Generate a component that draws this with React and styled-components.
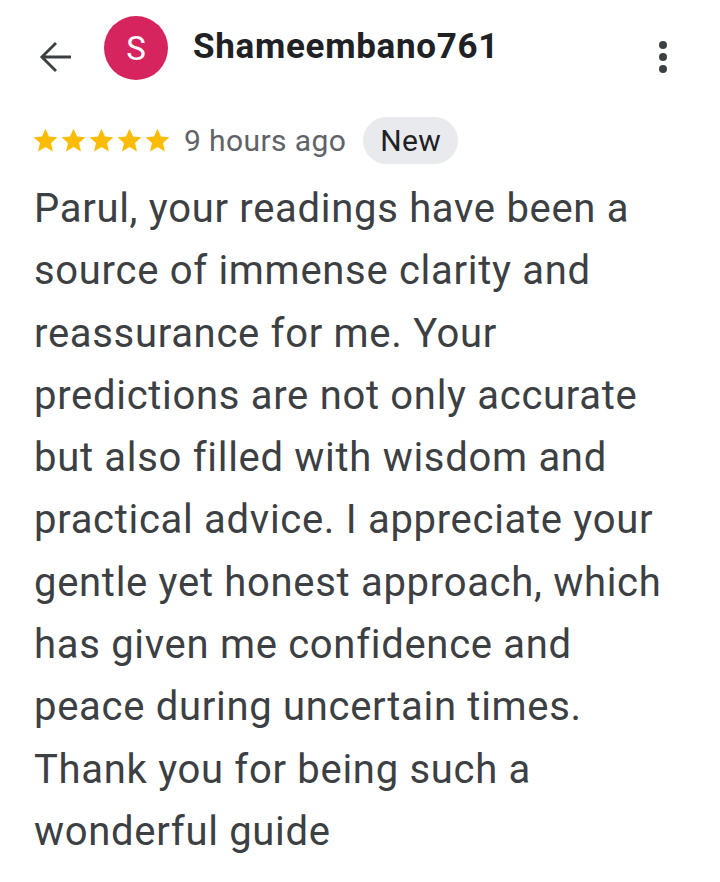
import React from 'react'
import styled, { createGlobalStyle } from 'styled-components'

const GlobalStyle = createGlobalStyle`
  html, body {
    margin: 0;
    padding: 0;
    background: #ffffff;
  }
  body {
    font-family: Roboto, "Noto Sans", Arial, sans-serif;
    -webkit-font-smoothing: antialiased;
  }
`;

const Page = styled.div`
  width: 720px;
  height: 882px;
  background: #fff;
  overflow: hidden;
`;

const Header = styled.header`
  display: flex;
  align-items: center;
  height: 96px;
  padding: 0 40px 0 38px;
`;

const BackButton = styled.button`
  border: 0;
  background: none;
  padding: 0;
  width: 36px;
  height: 36px;
  margin-top: 18px;
  display: flex;
  align-items: center;
  justify-content: center;
`;

const Avatar = styled.div`
  width: 64px;
  height: 64px;
  border-radius: 50%;
  background: #d6245f;
  color: #fff;
  font-size: 33px;
  display: flex;
  align-items: center;
  justify-content: center;
  margin-left: 30px;
  flex-shrink: 0;
`;

const Name = styled.h1`
  margin: -4px 0 0 25px;
  font-size: 35px;
  font-weight: 700;
  color: #202124;
  flex: 1;
  letter-spacing: 0.7px;
`;

const MoreButton = styled.button`
  border: 0;
  background: none;
  padding: 0;
  width: 8px;
  display: flex;
  flex-direction: column;
  gap: 4px;
  margin-top: 18px;
  margin-right: 13px;
`;

const Dot = styled.span`
  width: 8px;
  height: 8px;
  border-radius: 50%;
  background: #3c4043;
`;

const Meta = styled.div`
  display: flex;
  align-items: center;
  padding: 20px 0 0 32px;
  height: 48px;
`;

const Stars = styled.div`
  display: flex;
  gap: 1px;
  margin-right: 13px;
`;

const TimeAgo = styled.span`
  font-size: 30px;
  letter-spacing: 0.4px;
  color: #5f6368;
  margin-right: 17px;
`;

const Badge = styled.span`
  display: inline-flex;
  align-items: center;
  height: 47px;
  padding: 0 17px;
  border-radius: 24px;
  background: #e8eaed;
  color: #202124;
  font-size: 30px;
  letter-spacing: 0.4px;
`;

const Body = styled.p`
  margin: 14px 0 0 0;
  padding: 0 50px 0 34px;
  font-size: 40px;
  letter-spacing: 0.7px;
  line-height: 62.3px;
  color: #3c4043;
`;

const Star = () => (
  <svg width="27" height="27" viewBox="0 0 24 24">
    <path fill="#fbbc04" d="M12 1.5l3.1 7 7.5.7-5.7 5 1.7 7.5L12 17.8l-6.6 3.9 1.7-7.5-5.7-5 7.5-.7z" />
  </svg>
);

export default function App() {
  return (
    <Page>
      <GlobalStyle />
      <Header>
        <BackButton aria-label="Back">
          <svg width="36" height="36" viewBox="0 0 24 24">
            <path fill="none" stroke="#3c4043" strokeWidth="1.9" d="M22 12H2.8M12 2.6L2.6 12l9.4 9.4" />
          </svg>
        </BackButton>
        <Avatar>S</Avatar>
        <Name>Shameembano761</Name>
        <MoreButton aria-label="More">
          <Dot /><Dot /><Dot />
        </MoreButton>
      </Header>
      <Meta>
        <Stars>
          {[0, 1, 2, 3, 4].map(i => <Star key={i} />)}
        </Stars>
        <TimeAgo>9 hours ago</TimeAgo>
        <Badge>New</Badge>
      </Meta>
      <Body>
        Parul, your readings have been a source of immense clarity and reassurance for me. Your predictions are not only accurate but also filled with wisdom and practical advice. I appreciate your gentle yet honest approach, which has given me confidence and peace during uncertain times. Thank you for being such a wonderful guide
      </Body>
    </Page>
  )
}
